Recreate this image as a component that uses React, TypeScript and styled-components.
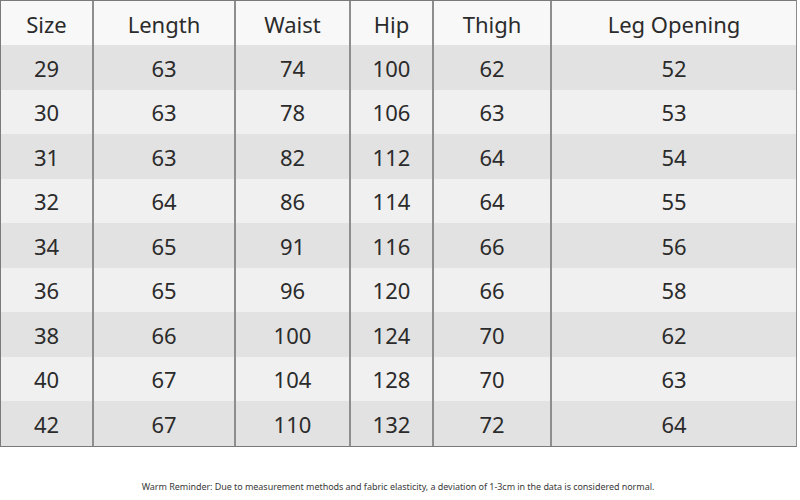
import React from 'react';
import styled, { createGlobalStyle } from 'styled-components';

const GlobalStyle = createGlobalStyle`
  html, body {
    margin: 0;
    padding: 0;
    background: #ffffff;
  }
  body {
    font-family: "Noto Sans", "Open Sans", sans-serif;
    color: #2b2b2b;
  }
`;

const Page = styled.div`
  width: 800px;
  height: 500px;
  display: flex;
  flex-direction: column;
  background: #ffffff;
`;

const Table = styled.div`
  width: 797px;
  box-sizing: border-box;
  border: 1px solid #7a7a7a;
  border-right-color: #8c8c8c;
  display: flex;
  flex-direction: column;
`;

const Row = styled.div<{ $bg: string; $h: number }>`
  display: grid;
  grid-template-columns: 91px 142px 115px 83px 118px 1fr;
  height: ${(p) => p.$h}px;
  background: ${(p) => p.$bg};
`;

const Cell = styled.div<{ $first?: boolean }>`
  display: flex;
  align-items: center;
  justify-content: center;
  font-size: 22px;
  line-height: 1;
  padding-top: 1px;
  box-sizing: border-box;
  border-left: ${(p) => (p.$first ? 'none' : '2px solid #8e8e8e')};
`;

const Footer = styled.div`
  flex: 1;
  display: flex;
  align-items: center;
  justify-content: center;
  padding-top: 26px;
  padding-right: 4px;
  font-size: 9px;
  color: #3a3a3a;
  letter-spacing: -0.05px;
`;

const headers = ['Size', 'Length', 'Waist', 'Hip', 'Thigh', 'Leg Opening'];

const rows = [
  ['29', '63', '74', '100', '62', '52'],
  ['30', '63', '78', '106', '63', '53'],
  ['31', '63', '82', '112', '64', '54'],
  ['32', '64', '86', '114', '64', '55'],
  ['34', '65', '91', '116', '66', '56'],
  ['36', '65', '96', '120', '66', '58'],
  ['38', '66', '100', '124', '70', '62'],
  ['40', '67', '104', '128', '70', '63'],
  ['42', '67', '110', '132', '72', '64'],
];

const App: React.FC = () => {
  return (
    <Page>
      <GlobalStyle />
      <Table>
        <Row $bg="#f8f8f8" $h={44}>
          {headers.map((h, i) => (
            <Cell key={h} $first={i === 0}>
              {h}
            </Cell>
          ))}
        </Row>
        {rows.map((r, ri) => (
          <Row key={r[0]} $bg={ri % 2 === 0 ? '#e2e2e2' : '#f0f0f0'} $h={44.5}>
            {r.map((v, i) => (
              <Cell key={i} $first={i === 0}>
                {v}
              </Cell>
            ))}
          </Row>
        ))}
      </Table>
      <Footer>
        Warm Reminder: Due to measurement methods and fabric elasticity, a deviation of 1-3cm in the data is considered normal.
      </Footer>
    </Page>
  );
};

export default App;
